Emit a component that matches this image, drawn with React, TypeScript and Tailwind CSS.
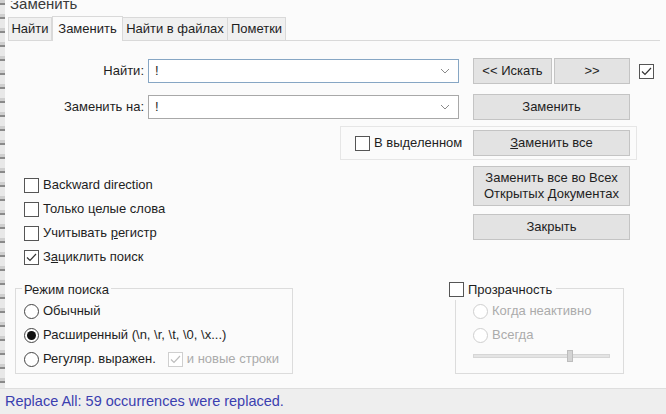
import type { ReactNode } from 'react'

const font = { fontFamily: '"Liberation Sans", Arial, sans-serif' }

const Check = ({ checked, disabled }: { checked?: boolean; disabled?: boolean }) => (
  <span
    className={`w-[15px] h-[15px] border flex items-center justify-center shrink-0 bg-white ${
      disabled ? 'border-[#cfcfcf]' : 'border-[#555]'
    }`}
  >
    {checked && (
      <svg width="11" height="9" viewBox="0 0 11 9">
        <path
          d="M1 4.5 L4 7.5 L10 1"
          fill="none"
          stroke={disabled ? '#bdbdbd' : '#333'}
          strokeWidth="1.2"
        />
      </svg>
    )}
  </span>
)

const Radio = ({ checked, disabled }: { checked?: boolean; disabled?: boolean }) => (
  <span
    className={`w-[15px] h-[15px] rounded-full border flex items-center justify-center shrink-0 bg-white ${
      disabled ? 'border-[#cfcfcf]' : 'border-[#444]'
    }`}
  >
    {checked && <span className="w-[9px] h-[9px] rounded-full bg-[#111]" />}
  </span>
)

const Btn = ({ children, className = '' }: { children: ReactNode; className?: string }) => (
  <div
    className={`bg-[#e3e3e3] border border-[#c4c4c4] flex items-center justify-center text-center text-[13px] leading-[16px] text-[#1e1e1e] ${className}`}
  >
    {children}
  </div>
)

const Combo = ({ focused }: { focused?: boolean }) => (
  <div
    className={`w-[311px] h-[24px] border bg-white flex items-center pl-[6px] pr-[8px] ${
      focused ? 'border-[#86a6c4]' : 'border-[#a8a8a8]'
    }`}
  >
    <span className="flex-1 text-[13px]">!</span>
    <svg width="10" height="6" viewBox="0 0 10 6">
      <path d="M1 1 L5 5 L9 1" fill="none" stroke="#8a8a8a" strokeWidth="1" />
    </svg>
  </div>
)

const Row = ({ children, box }: { children: ReactNode; box: ReactNode }) => (
  <div className="h-[24px] flex items-center gap-[4px]">
    {box}
    <span>{children}</span>
  </div>
)

export default function App() {
  return (
    <div
      className="w-[666px] h-[414px] bg-[#fbfbfb] text-[#1e1e1e] text-[13px] flex flex-col overflow-hidden"
      style={font}
    >
      <div className="flex flex-1">
        <div className="w-[5px] bg-[repeating-linear-gradient(180deg,#cfcfcf_0px,#cfcfcf_3px,#8a8a8a_3px,#8a8a8a_5px,#e8e8e8_5px,#e8e8e8_14px)]" />
        <div className="flex-1 flex flex-col">
          <div className="h-[15px] pl-[5px] pt-[1px]">
            <div className="text-[15px] leading-[14px] h-[14px] overflow-hidden text-[#3a3a3a]">
              <span className="block -mt-[4px]">Заменить</span>
            </div>
          </div>

          <div className="h-[26px] flex items-end pl-[3px] pr-[6px]">
            <div className="flex items-end flex-1 border-b border-[#d9d9d9]">
              <div className="h-[23px] w-[44px] bg-[#f0f0f0] border border-[#d9d9d9] border-b-0 flex items-center justify-center">
                Найти
              </div>
              <div className="h-[25px] w-[71px] -mb-px bg-[#fbfbfb] border border-[#d9d9d9] border-b-0 flex items-center justify-center">
                Заменить
              </div>
              <div className="h-[23px] w-[105px] bg-[#f0f0f0] border border-[#d9d9d9] border-b-0 border-l-0 flex items-center justify-center">
                Найти в файлах
              </div>
              <div className="h-[23px] w-[58px] bg-[#f0f0f0] border border-[#d9d9d9] border-b-0 border-l-0 flex items-center justify-center">
                Пометки
              </div>
            </div>
          </div>

          <div className="pt-[17px] flex flex-col">
            <div className="flex items-center h-[26px]">
              <span className="w-[143px] text-right pr-[4px]">Найти:</span>
              <Combo focused />
              <Btn className="ml-[14px] w-[79px] h-[26px]">&lt;&lt; Искать</Btn>
              <Btn className="ml-[2px] w-[76px] h-[26px]">&gt;&gt;</Btn>
              <span className="ml-[9px]">
                <Check checked />
              </span>
            </div>

            <div className="flex items-center h-[26px] mt-[10px]">
              <span className="w-[143px] text-right pr-[4px]">Заменить на:</span>
              <Combo />
              <Btn className="ml-[14px] w-[157px] h-[26px]">Заменить</Btn>
            </div>

            <div className="ml-[335px] mt-[6px] w-[297px] h-[34px] border border-[#e6e6e6] flex items-center">
              <div className="w-[132px] pl-[14px] flex items-center gap-[4px]">
                <Check />
                <span>В выделенном</span>
              </div>
              <Btn className="w-[157px] h-[26px]">
                <span>
                  <span className="underline">З</span>аменить все
                </span>
              </Btn>
            </div>

            <div className="flex">
              <div className="w-[468px] pl-[19px] pt-[13px] flex flex-col">
                <Row box={<Check />}>Backward direction</Row>
                <Row box={<Check />}>Только целые слова</Row>
                <Row box={<Check />}>
                  Учитывать <span className="underline">р</span>егистр
                </Row>
                <Row box={<Check checked />}>
                  З<span className="underline">а</span>циклить поиск
                </Row>
              </div>
              <div className="pt-[6px] flex flex-col gap-[8px]">
                <Btn className="w-[157px] h-[40px]">
                  Заменить все во Всех
                  <br />
                  Открытых Документах
                </Btn>
                <Btn className="w-[157px] h-[26px]">Закрыть</Btn>
              </div>
            </div>

            <div className="flex mt-[19px]">
              <div className="ml-[10px] w-[278px] h-[86px] border border-[#dcdcdc] relative pl-[8px] pt-[10px]">
                <span className="absolute -top-[9px] left-[6px] px-[2px] bg-[#fbfbfb]">Режим поиска</span>
                <Row box={<Radio />}>Обычный</Row>
                <Row box={<Radio checked />}>{'Расширенный (\\n, \\r, \\t, \\0, \\x...)'}</Row>
                <div className="h-[24px] flex items-center gap-[4px]">
                  <Radio />
                  <span>Регуляр. выражен.</span>
                  <span className="ml-[8px] flex items-center gap-[4px] text-[#ababab]">
                    <Check checked disabled />
                    и новые строки
                  </span>
                </div>
              </div>

              <div className="ml-[156px] flex flex-col">
                <div className="h-[0px] relative">
                  <div className="absolute -top-[8px] left-0 flex items-center gap-[4px] bg-[#fbfbfb] pr-[4px]">
                    <Check />
                    <span>Прозрачность</span>
                  </div>
                </div>
                <div className="ml-[6px] w-[169px] h-[86px] border border-[#dcdcdc] pl-[17px] pt-[10px] flex flex-col text-[#ababab]">
                  <Row box={<Radio disabled />}>Когда неактивно</Row>
                  <Row box={<Radio disabled />}>Всегда</Row>
                  <div className="h-[18px] flex items-center relative w-[137px]">
                    <div className="w-full h-[4px] bg-[#e4e4e4] border border-[#d6d6d6]" />
                    <div className="absolute left-[94px] top-[3px] w-[6px] h-[12px] bg-[#d4d4d4] border border-[#bdbdbd]" />
                  </div>
                </div>
              </div>
            </div>
          </div>
        </div>
      </div>

      <div className="h-[26px] bg-[#eeeeee] border-t border-[#dedede] flex items-center pl-[5px]">
        <span className="text-[14.5px] text-[#3b40b0]">Replace All: 59 occurrences were replaced.</span>
      </div>
    </div>
  )
}
